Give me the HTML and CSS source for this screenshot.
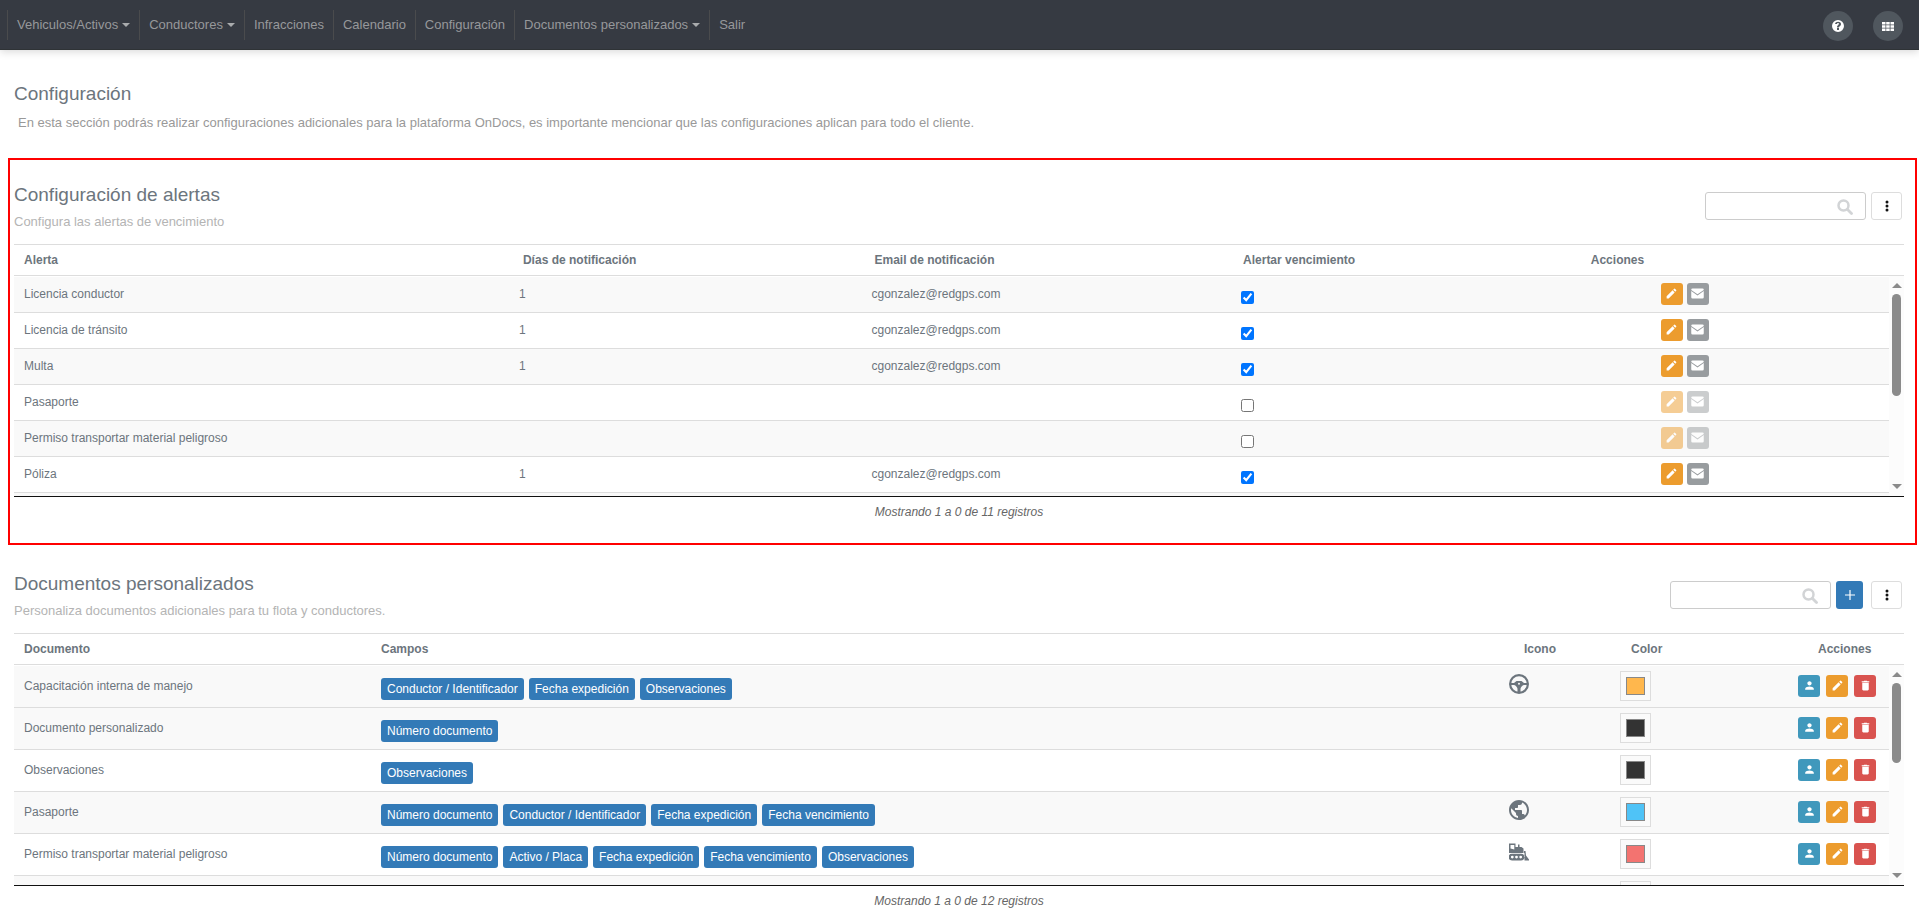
FILE: index.html
```
<!DOCTYPE html>
<html lang="es">
<head>
    <meta charset="UTF-8">
    <meta name="viewport" content="width=device-width, initial-scale=1.0">
    <title>Configuración</title>
    <link rel="stylesheet" href="styles.css">
</head>
<body>
    <svg class="sprite" aria-hidden="true">
        <symbol id="i-help" viewBox="0 0 24 24"><path d="M12 0a12 12 0 1 0 0 24 12 12 0 0 0 0-24zm2 20h-4v-4h4zm2.600-8.300C15.300 13 14 13.500 14 15h-4c0-3 1-4 2.300-5.100C13.400 8.900 14 8.500 14 7.500c0-2.300-4-2.300-4 .5H6.200C6.200 1.800 18 1.800 18 7.800c0 1.700-.5 2.900-1.400 3.900z"/></symbol>
        <symbol id="i-apps" viewBox="0 0 12 9"><path d="M0 0h3.500v2.500H0zM4.200 0h3.500v2.500H4.200zM8.500 0H12v2.500H8.500zM0 3.300h3.500v2.400H0zM4.200 3.300h3.500v2.400H4.200zM8.500 3.300H12v2.400H8.500zM0 6.500h3.500V9H0zM4.200 6.500h3.500V9H4.200zM8.500 6.500H12V9H8.500z"/></symbol>
        <symbol id="i-search" viewBox="0 0 16 16"><circle cx="6.500" cy="6.500" r="5" fill="none" stroke="currentColor" stroke-width="2.500"/><path d="M10.500 10.500l4 4" stroke="currentColor" stroke-width="2.800" stroke-linecap="round"/></symbol>
        <symbol id="i-dots" viewBox="0 0 4 12"><circle cx="2" cy="2" r="1.500"/><circle cx="2" cy="6" r="1.500"/><circle cx="2" cy="10" r="1.500"/></symbol>
        <symbol id="i-plus" viewBox="0 0 12 12"><path d="M5.400 1h1.200v4.400H11v1.200H6.600V11H5.400V6.600H1V5.400h4.400z"/></symbol>
        <symbol id="i-edit" viewBox="0 0 24 24"><path d="M3 17.250V21h3.750L17.810 9.940l-3.750-3.750L3 17.250zM20.710 7.040a1 1 0 0 0 0-1.410l-2.340-2.340a1 1 0 0 0-1.410 0l-1.830 1.830 3.750 3.750 1.830-1.830z"/></symbol>
        <symbol id="i-mail" viewBox="0 0 24 24"><path d="M20 4H4a2 2 0 0 0-2 2v12a2 2 0 0 0 2 2h16a2 2 0 0 0 2-2V6a2 2 0 0 0-2-2zm2 4l-10 7L2 8V6.300l10 7 10-7z"/></symbol>
        <symbol id="i-person" viewBox="0 0 24 24"><path d="M12 12c2.210 0 4-1.790 4-4s-1.790-4-4-4-4 1.790-4 4 1.790 4 4 4zm0 2c-2.670 0-8 1.340-8 4v2h16v-2c0-2.660-5.330-4-8-4z"/></symbol>
        <symbol id="i-trash" viewBox="0 0 24 24"><path d="M6 19c0 1.100.9 2 2 2h8c1.100 0 2-.9 2-2V7H6v12zM19 4h-3.500l-1-1h-5l-1 1H5v2h14V4z"/></symbol>
        <symbol id="i-wheel" viewBox="2 2 20 20"><circle cx="12" cy="12" r="8.900" fill="none" stroke="currentColor" stroke-width="2.200"/><path d="M3.500 11H7l2.500-2h5l2.500 2h3.500v2h-3.600c-1.800.6-3 1.900-3.400 3.800V20.500h-3v-3.700C10.100 14.900 8.900 13.600 7.100 13H3.500zM12 10.700a1 1 0 1 0 0 2 1 1 0 0 0 0-2z" fill-rule="evenodd"/></symbol>
        <symbol id="i-globe" viewBox="2 2 20 20"><path d="M12 2C6.480 2 2 6.480 2 12s4.480 10 10 10 10-4.480 10-10S17.520 2 12 2zm-1 17.930c-3.950-.49-7-3.850-7-7.930 0-.62.08-1.210.21-1.790L9 15v1c0 1.100.9 2 2 2v1.930zm6.900-2.540c-.26-.81-1-1.390-1.900-1.390h-1v-3c0-.55-.45-1-1-1H8v-2h2c.55 0 1-.45 1-1V7h2c1.100 0 2-.9 2-2v-.41c2.930 1.190 5 4.060 5 7.410 0 2.080-.8 3.970-2.100 5.390z"/></symbol>
        <symbol id="i-dozer" viewBox="0 0 20 20"><path fill-rule="evenodd" d="M0 1.500h6.500V5H9V2.500h1.500V5h2l2 1.500V11H0zM1.500 3v3.500l3.800 1V3zM14 9h2.500l.5 4.500 3 4v1h-4.500V11H14zM3 11.700h9a3.400 3.400 0 0 1 0 6.800H3a3.400 3.400 0 0 1 0-6.800zm.3 2a1.400 1.400 0 1 0 0 2.800 1.400 1.400 0 0 0 0-2.800zm4.200 0a1.400 1.400 0 1 0 0 2.800 1.400 1.400 0 0 0 0-2.800zm4.200 0a1.400 1.400 0 1 0 0 2.800 1.400 1.400 0 0 0 0-2.800z"/></symbol>
    </svg>

    <nav class="navbar">
        <ul class="menu">
            <li><a href="#" class="dropdown">Vehiculos/Activos</a></li>
            <li><a href="#" class="dropdown">Conductores</a></li>
            <li><a href="#">Infracciones</a></li>
            <li><a href="#">Calendario</a></li>
            <li><a href="#">Configuración</a></li>
            <li><a href="#" class="dropdown">Documentos personalizados</a></li>
            <li><a href="#">Salir</a></li>
        </ul>
        <div class="nav-buttons">
            <button type="button" class="round" aria-label="Ayuda"><svg width="12" height="12"><use href="#i-help"/></svg></button>
            <button type="button" class="round" aria-label="Aplicaciones"><svg width="12" height="9"><use href="#i-apps"/></svg></button>
        </div>
    </nav>

    <main>
        <header class="intro">
            <h1>Configuración</h1>
            <p>En esta sección podrás realizar configuraciones adicionales para la plataforma OnDocs, es importante mencionar que las configuraciones aplican para todo el cliente.</p>
        </header>

        <section class="panel highlighted">
            <div class="panel-head">
                <div>
                    <h2>Configuración de alertas</h2>
                    <p>Configura las alertas de vencimiento</p>
                </div>
                <div class="toolbar">
                    <label class="search"><input type="text" aria-label="Buscar alerta"><svg width="16" height="16"><use href="#i-search"/></svg></label>
                    <button type="button" class="more" aria-label="Opciones"><svg width="4" height="12"><use href="#i-dots"/></svg></button>
                </div>
            </div>
            <table class="head-table alerts-head">
                <thead>
                    <tr><th>Alerta</th><th>Días de notificación</th><th>Email de notificación</th><th>Alertar vencimiento</th><th>Acciones</th></tr>
                </thead>
            </table>
            <div class="scroll">
                <div class="rows">
                    <table class="alerts-body">
                        <tbody id="alerts"></tbody>
                    </table>
                </div>
                <div class="scrollbar"><span class="thumb"></span></div>
            </div>
            <p class="info">Mostrando 1 a 0 de 11 registros</p>
        </section>

        <section class="panel">
            <div class="panel-head">
                <div>
                    <h2>Documentos personalizados</h2>
                    <p>Personaliza documentos adicionales para tu flota y conductores.</p>
                </div>
                <div class="toolbar">
                    <label class="search"><input type="text" aria-label="Buscar documento"><svg width="16" height="16"><use href="#i-search"/></svg></label>
                    <button type="button" class="add" aria-label="Agregar"><svg width="12" height="12"><use href="#i-plus"/></svg></button>
                    <button type="button" class="more" aria-label="Opciones"><svg width="4" height="12"><use href="#i-dots"/></svg></button>
                </div>
            </div>
            <table class="head-table docs-head">
                <thead>
                    <tr><th>Documento</th><th>Campos</th><th>Icono</th><th>Color</th><th>Acciones</th></tr>
                </thead>
            </table>
            <div class="scroll">
                <div class="rows">
                    <table class="docs-body">
                        <tbody id="docs"></tbody>
                    </table>
                </div>
                <div class="scrollbar"><span class="thumb short"></span></div>
            </div>
            <p class="info">Mostrando 1 a 0 de 12 registros</p>
        </section>
    </main>
    <script src="script.js"></script>
</body>
</html>
```
FILE: styles.css
```
* {
    box-sizing: border-box;
}

body {
    margin: 0;
    font-family: "Liberation Sans", Arial, sans-serif;
    font-size: 12px;
    line-height: 18px;
    color: #6c757d;
    background-color: #fff;
}

h1, h2, p, ul {
    margin: 0;
    padding: 0;
    font-weight: normal;
}

svg {
    display: block;
    fill: currentColor;
}

.sprite {
    display: none;
}

button {
    display: flex;
    align-items: center;
    justify-content: center;
    padding: 0;
    border: none;
    border-radius: 3px;
    color: #fff;
    cursor: pointer;
}

/* navbar */
.navbar {
    display: flex;
    justify-content: space-between;
    height: 50px;
    padding: 10px 16px 0 7px;
    background-color: #363a42;
    border-bottom: 1px solid #2f3336;
    box-shadow: 0 2px 8px rgba(0, 0, 0, 0.15);
}

.menu {
    display: flex;
    list-style: none;
}

.menu a {
    display: flex;
    align-items: center;
    height: 30px;
    padding: 0 9px;
    border-left: 1px solid #4a4b4d;
    font-size: 13px;
    color: #96989b;
    text-decoration: none;
}

.dropdown::after {
    content: "";
    margin-left: 4px;
    border: 4px solid transparent;
    border-top-color: #a9abad;
    border-bottom: none;
}

.nav-buttons {
    display: flex;
    gap: 20px;
    padding-top: 1px;
}

.round {
    width: 30px;
    height: 30px;
    border-radius: 50%;
    background-color: #50575e;
}

/* content */
main {
    padding: 0 15px 0 14px;
}

.intro {
    height: 108px;
    padding-top: 32px;
}

h1, h2 {
    font-size: 19px;
    line-height: 24px;
}

.intro p {
    padding: 8px 4px 0;
    font-size: 13px;
    color: #999;
}

.panel {
    padding-top: 27px;
}

.highlighted {
    margin: 0 -13px 0 -6px;
    padding: 23px 11px 22px 4px;
    border: 2px solid #f00;
}

.panel-head {
    display: flex;
    justify-content: space-between;
    height: 61px;
}

.panel-head p {
    padding-top: 6px;
    font-size: 13px;
    color: #b4b4b4;
}

.toolbar {
    display: flex;
    align-items: flex-start;
    padding: 9px 2px 0 0;
}

.search {
    display: flex;
    position: relative;
}

.search input {
    width: 161px;
    height: 28px;
    padding: 4px 30px 4px 8px;
    border: 1px solid #ccc;
    border-radius: 3px;
    outline: none;
}

.search svg {
    position: absolute;
    top: 7px;
    right: 13px;
    color: #d2d4d6;
}

.more {
    width: 31px;
    height: 28px;
    margin-left: 5px;
    border: 1px solid #ddd;
    background-color: #fff;
    color: #111;
}

.add {
    width: 27px;
    height: 28px;
    margin: 0 3px 0 5px;
    background-color: #337ab7;
}

/* tables */
table {
    width: 100%;
    table-layout: fixed;
    border-collapse: separate;
    border-spacing: 0;
}

th, td {
    padding: 0 10px;
    text-align: left;
    white-space: nowrap;
}

.head-table th {
    height: 32px;
    border-top: 1px solid #ddd;
    border-bottom: 1px solid #ddd;
}

.scroll {
    display: flex;
    height: 221px;
    border-bottom: 1px solid #111;
}

.rows {
    flex: 1;
    padding-top: 1px;
    overflow: hidden;
}

.rows td {
    padding-bottom: 2px;
    border-bottom: 1px solid #ddd;
}

.scrollbar {
    display: flex;
    flex-direction: column;
    align-items: center;
    width: 15px;
    padding: 7px 0;
    background-color: #fcfcfc;
}

.scrollbar::before,
.scrollbar::after {
    content: "";
    border: 5px solid transparent;
}

.scrollbar::before {
    border-top: none;
    border-bottom-color: #8b8b8b;
}

.scrollbar::after {
    margin-top: auto;
    border-bottom: none;
    border-top-color: #8b8b8b;
}

.thumb {
    width: 9px;
    height: 102px;
    margin-top: 6px;
    border-radius: 5px;
    background-color: #8b8b8b;
}

.thumb.short {
    height: 80px;
}

.striped {
    background-color: #f9f9f9;
}

.info {
    padding-top: 7px;
    line-height: 17px;
    font-style: italic;
    text-align: center;
    color: #666;
}

.alerts-body td {
    height: 36px;
}

.alerts-head th:nth-child(1) { width: 26.4%; }
.alerts-head th:nth-child(2) { width: 18.6%; }
.alerts-head th:nth-child(3) { width: 19.5%; }
.alerts-head th:nth-child(4) { width: 18.4%; }

.alerts-body td:nth-child(1) { width: 26.4%; }
.alerts-body td:nth-child(2) { width: 18.8%; }
.alerts-body td:nth-child(3) { width: 19.7%; }
.alerts-body td:nth-child(4) { width: 13.3%; }

.alerts-body input {
    display: block;
    width: 13px;
    height: 13px;
    margin: 8px 0 0;
}

.docs-body td {
    height: 42px;
}

.docs-head th:nth-child(1) { width: 357px; }
.docs-head th:nth-child(3) { width: 107px; }
.docs-head th:nth-child(4) { width: 187px; }
.docs-head th:nth-child(5) { width: 96px; }

.docs-body td:nth-child(1) { width: 357px; }
.docs-body td:nth-child(3) { width: 111px; }
.docs-body td:nth-child(4) { width: 178px; }
.docs-body td:nth-child(5) { width: 101px; }

.docs-body td > svg {
    margin-bottom: 3px;
}

.actions {
    display: flex;
    justify-content: center;
    gap: 4px;
}

.docs-body .actions {
    justify-content: flex-start;
    gap: 6px;
}

.actions button {
    width: 22px;
    height: 22px;
}

.actions button:disabled {
    opacity: 0.5;
}

.edit { background-color: #ec9c2e; }
.mail { background-color: #989c9f; }
.user { background-color: #4098bc; }
.delete { background-color: #d9534f; }

.fields {
    display: flex;
    gap: 5px;
    padding-top: 6px;
}

.badge {
    height: 22px;
    padding: 2px 6px;
    border-radius: 3px;
    background-color: #337ab7;
    color: #fff;
}

.swatch {
    width: 31px;
    height: 30px;
    padding: 5px;
    border: 1px solid #ddd;
    background-color: #fafafa;
}

.swatch span {
    display: block;
    width: 19px;
    height: 18px;
    border: 1px solid #888;
}
```
FILE: script.js
```
const alerts = [
    ['Licencia conductor', true],
    ['Licencia de tránsito', true],
    ['Multa', true],
    ['Pasaporte', false],
    ['Permiso transportar material peligroso', false],
    ['Póliza', true]
];

const docs = [
    ['Capacitación interna de manejo', ['Conductor / Identificador', 'Fecha expedición', 'Observaciones'], 'wheel', '#ffb74d', true],
    ['Documento personalizado', ['Número documento'], '', '#333333', true],
    ['Observaciones', ['Observaciones'], '', '#333333', false],
    ['Pasaporte', ['Número documento', 'Conductor / Identificador', 'Fecha expedición', 'Fecha vencimiento'], 'globe', '#4fc3f7', true],
    ['Permiso transportar material peligroso', ['Número documento', 'Activo / Placa', 'Fecha expedición', 'Fecha vencimiento', 'Observaciones'], 'dozer', '#f37370', false],
    ['', [], '', '#333333', true]
];

function icon(name, size) {
    return `<svg width="${size}" height="${size}"><use href="#i-${name}"/></svg>`;
}

function button(cls, name, label, disabled) {
    return `<button type="button" class="${cls}" aria-label="${label}" ${disabled ? 'disabled' : ''}>${icon(name, name === 'mail' ? 15 : 13)}</button>`;
}

document.getElementById('alerts').innerHTML = alerts.map(([name, on], i) => `
    <tr class="${i % 2 ? '' : 'striped'}">
        <td>${name}</td>
        <td>${on ? '1' : ''}</td>
        <td>${on ? 'cgonzalez@redgps.com' : ''}</td>
        <td><input type="checkbox" aria-label="Alertar ${name}" ${on ? 'checked' : ''}></td>
        <td><div class="actions">${button('edit', 'edit', 'Editar', !on)}${button('mail', 'mail', 'Correo', !on)}</div></td>
    </tr>`).join('') + '<tr class="striped"><td colspan="5"></td></tr>';

document.getElementById('docs').innerHTML = docs.map(([name, fields, ico, color, striped]) => `
    <tr class="${striped ? 'striped' : ''}">
        <td>${name}</td>
        <td><div class="fields">${fields.map(f => `<span class="badge">${f}</span>`).join('')}</div></td>
        <td>${ico ? icon(ico, 20) : ''}</td>
        <td><div class="swatch"><span style="background-color: ${color}"></span></div></td>
        <td><div class="actions">${button('user', 'person', 'Asignar')}${button('edit', 'edit', 'Editar')}${button('delete', 'trash', 'Eliminar')}</div></td>
    </tr>`).join('');
```
